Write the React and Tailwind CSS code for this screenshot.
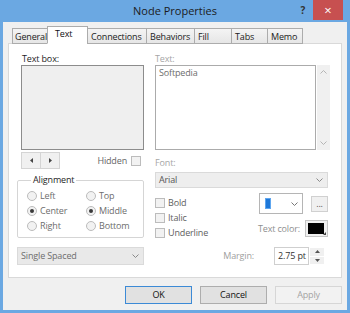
import React from "react";

const tabs = [
  ["General", 36],
  ["Text", 41],
  ["Connections", 60],
  ["Behaviors", 49],
  ["Fill", 38],
  ["Tabs", 37],
  ["Memo", 36],
];

function Chevron({ up, color = "#8a8a8a" }) {
  return (
    <svg width="7" height="4" viewBox="0 0 7 4">
      <path d={up ? "M0.5 3.5 L3.5 0.5 L6.5 3.5" : "M0.5 0.5 L3.5 3.5 L6.5 0.5"} fill="none" stroke={color} strokeWidth="1" />
    </svg>
  );
}

function Radio({ label, checked }) {
  return (
    <div className="flex items-center h-[15px] gap-[3px]">
      <span className="w-[10px] h-[10px] rounded-full border border-[#bcbcbc] bg-[#f2f2f2] flex items-center justify-center">
        {checked ? <span className="w-[4px] h-[4px] rounded-full bg-[#3a3a3a]" /> : null}
      </span>
      <span className="text-[#6d6d6d]">{label}</span>
    </div>
  );
}

function Check({ label }) {
  return (
    <div className="flex items-center h-[15px] gap-[3px]">
      <span className="w-[10px] h-[10px] border border-[#bcbcbc] bg-[#f2f2f2]" />
      <span className="text-[#5e5e5e]">{label}</span>
    </div>
  );
}

export default function App() {
  return (
    <div className="w-[350px] h-[313px] bg-[#6ba8e2] px-[3px] pb-[3px] flex flex-col font-['Open_Sans',sans-serif] text-[9px] leading-[12px] tracking-[-0.15px] text-[#1e1e1e]">
      {/* title bar */}
      <div className="h-[22px] grid grid-cols-[1fr_auto_1fr]">
        <div />
        <div className="pt-[4px] text-[11px] leading-[14px] tracking-normal text-[#1b1b1b]">Node Properties</div>
        <div className="flex justify-end items-start">
          <span className="mt-[4px] mr-[8px] text-[10px] leading-[12px] font-bold text-[#333]">?</span>
          <div className="w-[30px] h-[20px] mr-[4px] bg-[#c75050] flex items-center justify-center text-white text-[13px] leading-[12px]">
            ×
          </div>
        </div>
      </div>

      {/* client */}
      <div className="flex-1 bg-[#f0f0f0] px-[5px] pt-[4px] flex flex-col">
        <div className="flex items-end h-[18px] pl-[4px] -mb-px relative z-10">
          {tabs.map(([name, w], i) => {
            const active = name === "Text";
            return (
              <div
                key={name}
                style={{ width: w }}
                className={
                  active
                    ? "h-[18px] -ml-px bg-white border border-[#acacac] border-b-white pl-[7px] pt-[1px] text-[#111]"
                    : (i === 0 ? "pl-[2px] " : "-ml-px pl-[3px] ") +
                      "h-[16px] whitespace-nowrap bg-gradient-to-b from-[#f4f4f4] to-[#e6e6e6] border border-[#acacac] pt-[2px] text-[#222]"
                }
              >
                {name}
              </div>
            );
          })}
        </div>

        <div className="h-[235px] bg-white border border-[#d9d9d9] flex pl-[8px] pt-[8px] gap-[11px]">
          {/* left column */}
          <div className="w-[127px] flex flex-col">
            <div className="h-[13px] ml-[5px] pt-[1px] text-[#1e1e1e]">Text box:</div>
            <div className="ml-[4px] w-[123px] h-[85px] bg-[#efefef] border border-[#8c8c8c]" />
            <div className="mt-[2px] h-[17px] flex items-center">
              <div className="ml-[4px] flex">
                <div className="w-[20px] h-[17px] bg-[#f0f0f0] border border-[#d4d4d4] flex items-center justify-center">
                  <svg width="3" height="5" viewBox="0 0 3 5"><path d="M3 0 L0 2.5 L3 5 Z" fill="#444" /></svg>
                </div>
                <div className="w-[20px] h-[17px] -ml-px bg-[#f0f0f0] border border-[#d4d4d4] flex items-center justify-center">
                  <svg width="3" height="5" viewBox="0 0 3 5"><path d="M0 0 L3 2.5 L0 5 Z" fill="#444" /></svg>
                </div>
              </div>
              <div className="ml-auto mr-[3px] flex items-center gap-[4px]">
                <span className="text-[#666]">Hidden</span>
                <span className="w-[10px] h-[10px] border border-[#bcbcbc] bg-[#f2f2f2]" />
              </div>
            </div>

            <fieldset className="mt-[5px] w-[127px] border border-[#d5d5d5] rounded-[2px] pl-[9px] pt-[2px] pb-[4px]">
              <legend className="ml-[4px] px-[2px] text-[#1e1e1e]">Alignment</legend>
              <div className="grid grid-cols-[59px_1fr]">
                <Radio label="Left" />
                <Radio label="Top" />
                <Radio label="Center" checked />
                <Radio label="Middle" checked />
                <Radio label="Right" />
                <Radio label="Bottom" />
              </div>
            </fieldset>

            <div className="mt-[9px] w-[127px] h-[18px] bg-[#e9e9e9] border border-[#dadada] flex items-center pl-[3px] pr-[4px] text-[#6d6d6d]">
              <span className="flex-1">Single Spaced</span>
              <Chevron />
            </div>
          </div>

          {/* right column */}
          <div className="w-[175px] flex flex-col">
            <div className="h-[13px] pt-[1px] text-[#a6a6a6]">Text:</div>
            <div className="flex h-[85px]">
              <div className="w-[161px] h-[85px] border border-[#ababab] bg-white pl-[3px] pt-[1px] text-[#6d6d6d]">
                Softpedia
              </div>
              <div className="ml-[1px] w-[13px] h-[85px] bg-[#f0f0f0] flex flex-col items-center justify-between py-[5px]">
                <Chevron up color="#b5b5b5" />
                <Chevron color="#b5b5b5" />
              </div>
            </div>

            <div className="mt-[7px] h-[12px] text-[#a6a6a6]">Font:</div>
            <div className="mt-[3px] w-[173px] h-[16px] bg-[#eeeeee] border border-[#dadada] flex items-center pl-[3px] pr-[4px] text-[#555]">
              <span className="flex-1">Arial</span>
              <Chevron />
            </div>

            <div className="h-[53px] flex">
              <div className="mt-[7px] flex flex-col">
                <Check label="Bold" />
                <Check label="Italic" />
                <Check label="Underline" />
              </div>
              <div className="ml-auto mr-[2px] flex flex-col items-end">
                <div className="mt-[5px] flex items-center gap-[8px]">
                  <div className="w-[44px] h-[21px] bg-white border border-[#b5b5b5] flex items-center pl-[5px] pr-[4px]">
                    <span className="w-[6px] h-[11px] bg-[#1f78d8] border border-[#5fa6ef]" />
                    <span className="flex-1" />
                    <Chevron color="#777" />
                  </div>
                  <div className="w-[17px] h-[16px] bg-[#f0f0f0] border border-[#d0d0d0] flex items-center justify-center text-[#555] leading-[8px]">
                    ...
                  </div>
                </div>
                <div className="mt-[6px] flex items-center gap-[5px]">
                  <span className="text-[#8f8f8f]">Text color:</span>
                  <div className="relative w-[23px] h-[17px] bg-[#f0f0f0] border border-[#c4c4c4] p-[2px]">
                    <div className="w-[16px] h-[11px] bg-black" />
                    <svg className="absolute right-[1px] bottom-[1px]" width="3" height="3" viewBox="0 0 3 3">
                      <path d="M3 0 L3 3 L0 3 Z" fill="#444" />
                    </svg>
                  </div>
                </div>
              </div>
            </div>

            <div className="mt-[6px] h-[18px] flex items-center justify-end pr-[6px]">
              <span className="text-[#a0a0a0]">Margin:</span>
              <div className="ml-[20px] w-[35px] h-[18px] border border-[#cfcfcf] bg-white flex items-center pl-[3px] text-[#333]">
                2.75 pt
              </div>
              <div className="ml-[1px] w-[14px] h-[16px] flex flex-col gap-px">
                <div className="flex-1 bg-[#f0f0f0] flex items-center justify-center">
                  <svg width="5" height="3" viewBox="0 0 5 3"><path d="M0 3 L2.5 0 L5 3 Z" fill="#555" /></svg>
                </div>
                <div className="flex-1 bg-[#f0f0f0] flex items-center justify-center">
                  <svg width="5" height="3" viewBox="0 0 5 3"><path d="M0 0 L2.5 3 L5 0 Z" fill="#555" /></svg>
                </div>
              </div>
            </div>
          </div>
        </div>

        {/* buttons */}
        <div className="mt-[8px] flex justify-end gap-[8px]">
          <div className="w-[67px] h-[18px] bg-[#e1e1e1] border border-[#3c8ad6] flex items-center justify-center text-[#111]">OK</div>
          <div className="w-[67px] h-[18px] bg-[#e1e1e1] border border-[#adadad] flex items-center justify-center text-[#111]">Cancel</div>
          <div className="w-[67px] h-[18px] bg-[#f2f2f2] border border-[#d6d6d6] flex items-center justify-center text-[#a3a3a3]">Apply</div>
        </div>
      </div>
    </div>
  );
}
